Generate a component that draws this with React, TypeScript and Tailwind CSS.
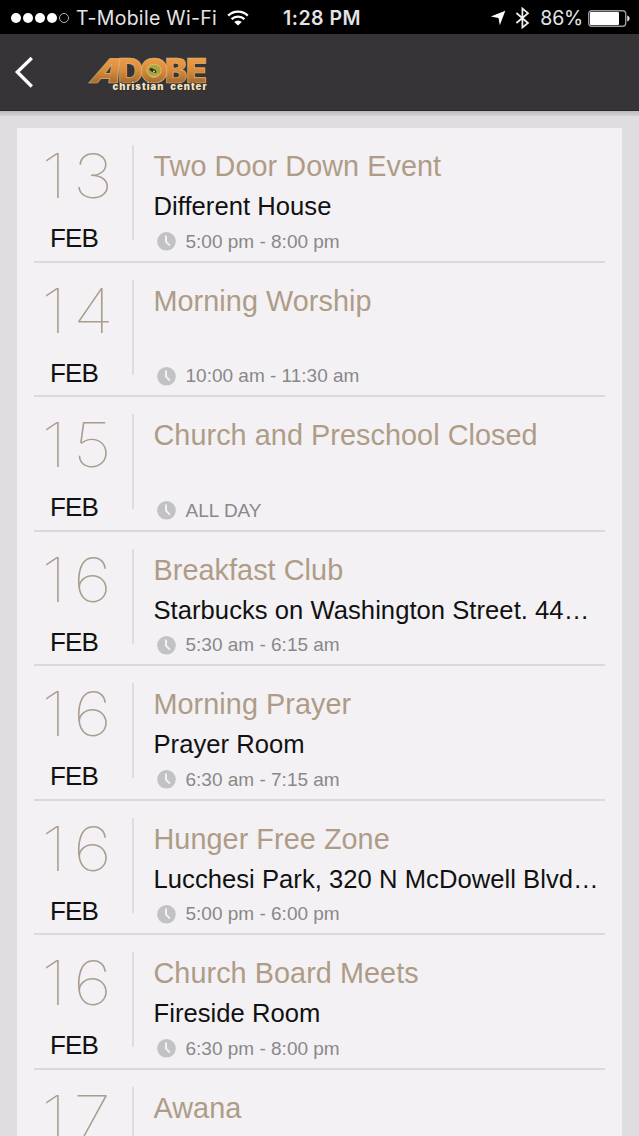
type ChurchEvent = {
  day: string;
  title: string;
  place?: string;
  time: string;
};

const EVENTS: ChurchEvent[] = [
  { day: "13", title: "Two Door Down Event", place: "Different House", time: "5:00 pm - 8:00 pm" },
  { day: "14", title: "Morning Worship", time: "10:00 am - 11:30 am" },
  { day: "15", title: "Church and Preschool Closed", time: "ALL DAY" },
  { day: "16", title: "Breakfast Club", place: "Starbucks on Washington Street. 44…", time: "5:30 am - 6:15 am" },
  { day: "16", title: "Morning Prayer", place: "Prayer Room", time: "6:30 am - 7:15 am" },
  { day: "16", title: "Hunger Free Zone", place: "Lucchesi Park, 320 N McDowell Blvd…", time: "5:00 pm - 6:00 pm" },
  { day: "16", title: "Church Board Meets", place: "Fireside Room", time: "6:30 pm - 8:00 pm" },
  { day: "17", title: "Awana", time: "" },
];

function StatusBar() {
  return (
    <div className="grid h-[34px] grid-cols-[1fr_auto_1fr] items-center bg-black pt-[2px] pr-[9px] pl-[11px] font-['Inter',sans-serif] text-[19.5px] leading-none text-[#e4e4e4]">
      <div className="flex items-center whitespace-nowrap">
        <div className="flex gap-[2px]">
          {[0, 1, 2, 3].map((dot) => (
            <span key={dot} className="size-[10px] rounded-full bg-white" />
          ))}
          <span className="size-[10px] rounded-full border border-[#b5b5b5]" />
        </div>
        <span className="ml-[7px] pt-px tracking-[0.3px]">T-Mobile Wi-Fi</span>
        <svg className="ml-[10px]" width="22" height="16" viewBox="0 0 22 16" fill="none" stroke="#fff" strokeWidth="2.3">
          <path d="M1.2 5.6a14 14 0 0 1 19.6 0" />
          <path d="M4.6 9.2a9.2 9.2 0 0 1 12.8 0" />
          <path d="M7.2 12a5.4 5.4 0 0 1 7.6 0L11 15.6Z" fill="#fff" stroke="none" />
        </svg>
      </div>
      <span className="pt-px pl-[3px] font-semibold tracking-[0.5px]">1:28 PM</span>
      <div className="flex items-center justify-end">
        <svg width="16" height="16" viewBox="0 0 16 16" fill="#fff">
          <path d="M15.3.7 9.8 15.3 8.5 8 .8 6.6Z" />
        </svg>
        <svg className="ml-[9px]" width="15" height="22" viewBox="0 0 15 22" fill="none" stroke="#f2f2f2" strokeWidth="1.7">
          <path d="M1.4 6 13 16 7.4 20.5V1.5L13 6.2 1.4 16" />
        </svg>
        <span className="ml-[10px] pt-px tracking-[-0.2px]">86%</span>
        <svg className="ml-[5px]" width="42" height="17" viewBox="0 0 42 17">
          <rect x="0.7" y="0.7" width="37" height="15.6" rx="3" fill="none" stroke="#9a9a9a" strokeWidth="1.4" />
          <rect x="2" y="2" width="29" height="13" rx="1" fill="#fff" />
          <path d="M39.2 5.5c3.2.7 3.2 5.3 0 6Z" fill="#ddd" />
        </svg>
      </div>
    </div>
  );
}

function Logo() {
  return (
    <svg width="124" height="40" viewBox="0 0 124 40" className="ml-[52px] overflow-visible">
      <defs>
        <linearGradient id="gold" x1="0" y1="0" x2="0" y2="1">
          <stop offset="0.15" stopColor="#f0a04a" />
          <stop offset="0.5" stopColor="#d98a3a" />
          <stop offset="0.85" stopColor="#a0652e" />
        </linearGradient>
      </defs>
      <g
        fill="url(#gold)"
        stroke="#dcb474"
        strokeWidth="0.7"
        fontFamily="Inter, sans-serif"
        fontWeight="900"
        fontSize="33.5"
      >
        <text transform="translate(2 30.5) skewX(-26)" textLength="30" lengthAdjust="spacingAndGlyphs">A</text>
        <text x="32" y="30.5" textLength="25" lengthAdjust="spacingAndGlyphs">D</text>
        <text x="79" y="30.5" textLength="22" lengthAdjust="spacingAndGlyphs">B</text>
        <text x="100" y="30.5" textLength="21" lengthAdjust="spacingAndGlyphs">E</text>
        <text x="54" y="30.5" textLength="28" lengthAdjust="spacingAndGlyphs">O</text>
      </g>
      <ellipse cx="68" cy="18.5" rx="7.2" ry="6.2" fill="#aaa63f" stroke="#e2be6a" />
      <ellipse cx="67" cy="18.5" rx="3.8" ry="1.6" fill="#303020" transform="rotate(28 67 18.5)" />
      <circle cx="68" cy="19.5" r="0.9" fill="#eee8b8" />
      <text
        x="26.5"
        y="38"
        fill="#f1e5c4"
        stroke="#332c25"
        strokeWidth="1"
        paintOrder="stroke"
        fontFamily="Inter, sans-serif"
        fontWeight="900"
        fontSize="9.5"
        textLength="94"
        wordSpacing="3"
      >
        christian center
      </text>
    </svg>
  );
}

function NavBar() {
  return (
    <header className="flex h-[77px] items-center border-b border-[#29272a] bg-[#363436] pl-[14px]">
      <svg width="20" height="34" viewBox="0 0 20 34" fill="none" stroke="#fff" strokeWidth="3.3">
        <path d="M17.8 3 3.3 17 17.8 31.5" />
      </svg>
      <Logo />
    </header>
  );
}

function ClockIcon() {
  return (
    <svg width="20" height="20" viewBox="0 0 20 20" className="shrink-0">
      <circle cx="9.5" cy="9.3" r="9.3" fill="#c2c1c3" />
      <path d="M9 3.6v6l3.9 4" fill="none" stroke="#f3f1f4" strokeWidth="2" />
    </svg>
  );
}

function EventRow({ day, title, place, time }: ChurchEvent) {
  return (
    <li className="flex h-[134.5px] shrink-0 border-b-2 border-[#dad9db] pt-[17px]">
      <div className="flex w-[98px] shrink-0 flex-col items-center pr-[18px]">
        <span className="mr-[3px] flex h-[62px] origin-center scale-x-[1.127] font-['Inter',sans-serif] text-[61px] leading-[63px] font-thin text-[#aa9d8e]">
          {day.split("").map((digit, i) => (
            <span key={i} className="w-[34px] text-center">{digit}</span>
          ))}
        </span>
        <span className="mt-[16px] text-[26px] leading-[30px] tracking-[-0.9px] text-[#111]">FEB</span>
      </div>
      <div className="h-[95px] w-[2px] shrink-0 bg-[#dddcde]" />
      <div className="min-w-0 flex-1 pl-[19.5px] whitespace-nowrap">
        <h2 className="h-[41px] text-[28.8px] leading-[42px] tracking-[0.06px] text-[#ae9c87]">{title}</h2>
        <p className="h-[40px] text-[25.6px] leading-[40px] tracking-[0.04px] text-[#111]">{place}</p>
        {time && (
          <div className="flex h-[32px] items-center gap-[9px] pl-[3px] text-[19px] text-[#89888a]">
            <ClockIcon />
            <span>{time}</span>
          </div>
        )}
      </div>
    </li>
  );
}

export default function App() {
  return (
    <div className="flex h-[1136px] w-[639px] flex-col overflow-hidden bg-[#dfdde0] font-['Liberation_Sans',Arial,sans-serif]">
      <StatusBar />
      <NavBar />
      <div className="h-[5px] shrink-0 bg-linear-to-b from-[#bcbabd] to-[#d2d0d3]" />
      <main className="mt-[12px] mr-[17px] ml-[17px] min-h-0 flex-1 overflow-hidden bg-[#f3f1f4] px-[17px] pt-[0.2px]">
        <ul className="flex flex-col">
          {EVENTS.map((event) => (
            <EventRow key={`${event.day}-${event.title}`} {...event} />
          ))}
        </ul>
      </main>
    </div>
  );
}
